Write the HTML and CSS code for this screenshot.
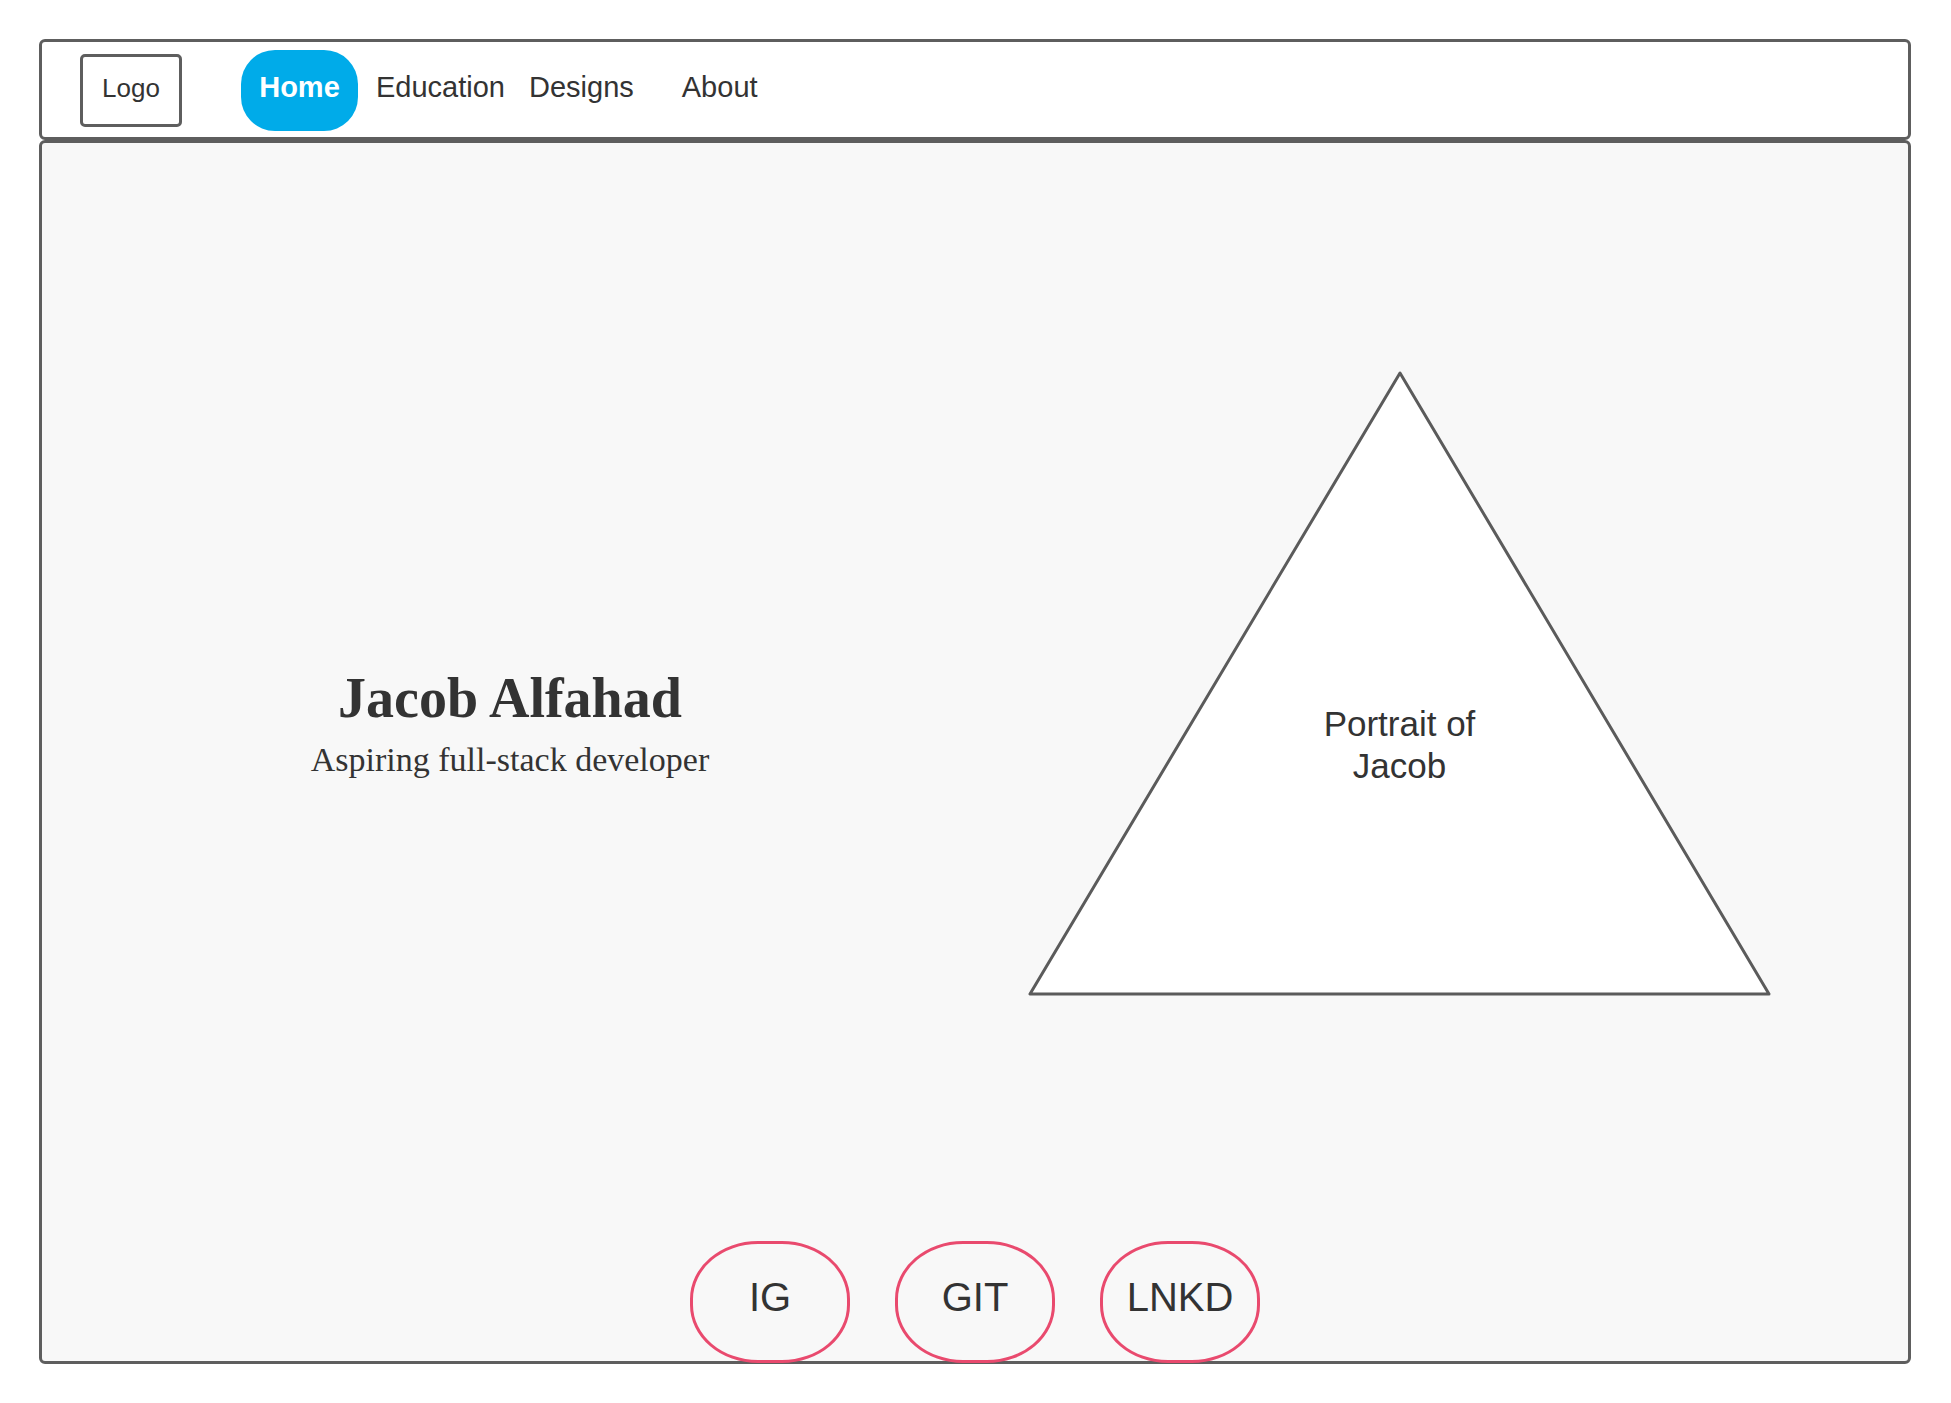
FILE: index.html
```html
<!DOCTYPE html>
<html lang="en">
<head>
<meta charset="utf-8">
<title>Jacob Alfahad</title>
<link rel="stylesheet" href="styles.css">
</head>
<body>
<div class="page">
  <header class="nav">
    <div class="logo">Logo</div>
    <a class="nav-home">Home</a>
    <a class="nav-link nav-education">Education</a>
    <a class="nav-link nav-designs">Designs</a>
    <a class="nav-link nav-about">About</a>
  </header>
  <main class="main">
    <section class="hero">
      <div class="intro">
        <h1 class="name">Jacob Alfahad</h1>
        <p class="tagline">Aspiring full-stack developer</p>
      </div>
      <div class="portrait">
        <svg class="triangle" width="745" height="627" viewBox="0 0 745 627">
          <polygon points="373,3 3,624 742,624" fill="#ffffff" stroke="#5b5b5b" stroke-width="3" stroke-linejoin="round"/>
        </svg>
        <div class="portrait-label">Portrait of<br>Jacob</div>
      </div>
    </section>
    <nav class="socials">
      <a class="social">IG</a>
      <a class="social">GIT</a>
      <a class="social">LNKD</a>
    </nav>
  </main>
</div>
</body>
</html>
```

FILE: styles.css
```css
html, body {
  margin: 0;
  padding: 0;
  background: #ffffff;
}

body {
  font-family: "Liberation Sans", Arial, sans-serif;
  color: #333333;
}

.page {
  padding: 39px 0 0 39px;
  width: 1872px;
}

.nav {
  box-sizing: border-box;
  height: 101px;
  border: 3px solid #5e5e5e;
  border-radius: 6px;
  background: #ffffff;
  display: flex;
  align-items: center;
  padding-left: 38px;
}

.logo {
  box-sizing: border-box;
  width: 102px;
  height: 73px;
  margin-top: 1px;
  border: 3px solid #5e5e5e;
  border-radius: 5px;
  display: flex;
  align-items: center;
  justify-content: center;
  font-size: 26px;
  color: #333333;
  padding-bottom: 4px;
}

.nav-home {
  box-sizing: border-box;
  margin-left: 59px;
  margin-top: 2px;
  width: 117px;
  height: 81px;
  border-radius: 34px;
  background: #00abe9;
  color: #ffffff;
  font-weight: bold;
  font-size: 29px;
  display: flex;
  align-items: center;
  justify-content: center;
  padding-bottom: 6px;
}

.nav-link {
  font-size: 29px;
  color: #333333;
  margin-top: -4px;
}

.nav-education { margin-left: 18px; }
.nav-designs { margin-left: 24px; }
.nav-about { margin-left: 48px; }

.main {
  box-sizing: border-box;
  height: 1224px;
  border: 3px solid #5e5e5e;
  border-radius: 6px;
  background: #f8f8f8;
  display: flex;
  flex-direction: column;
}

.hero {
  flex: 1;
  display: flex;
  align-items: flex-start;
}

.intro {
  width: 936px;
  padding-top: 522px;
  text-align: center;
}

.name {
  margin: 0;
  font-family: "Liberation Serif", "Times New Roman", serif;
  font-weight: bold;
  font-size: 56px;
  line-height: 1.2;
  color: #333333;
}

.tagline {
  margin: 8px 0 0;
  font-family: "Liberation Serif", "Times New Roman", serif;
  font-size: 34px;
  line-height: 1.2;
  color: #333333;
}

.portrait {
  position: relative;
  margin-left: 49px;
  margin-top: 227px;
  width: 745px;
  height: 627px;
}

.triangle {
  display: block;
}

.portrait-label {
  position: absolute;
  left: 0;
  right: 0;
  top: 333px;
  text-align: center;
  font-size: 35px;
  line-height: 42px;
  color: #333333;
}

.socials {
  display: flex;
  justify-content: center;
  gap: 45px;
  margin-bottom: -2px;
}

.social {
  box-sizing: border-box;
  width: 160px;
  height: 122px;
  border: 3px solid #e94a6e;
  border-radius: 68px / 58px;
  display: flex;
  align-items: center;
  justify-content: center;
  font-size: 40px;
  color: #333333;
  padding-bottom: 10px;
}
```
